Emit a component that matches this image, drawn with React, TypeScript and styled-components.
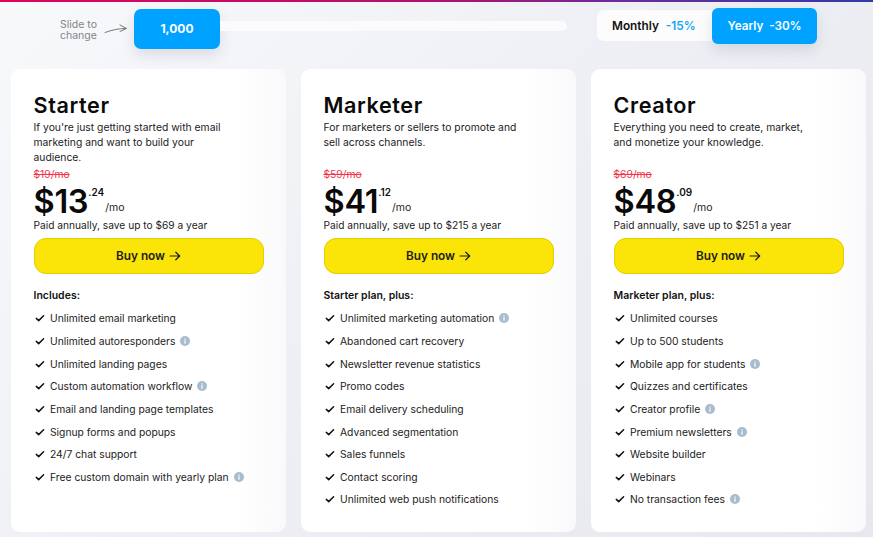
import React from "react";
import styled, { createGlobalStyle } from "styled-components";

const Global = createGlobalStyle`
  html, body { margin: 0; padding: 0; }
  body {
    width: 873px; height: 537px; overflow: hidden;
    font-family: Inter, "Liberation Sans", sans-serif;
    color: #111;
    background: linear-gradient(135deg, #f8f9fb 0%, #eef0f5 45%, #e6e8ee 100%);
  }
`;

const Page = styled.div`
  width: 873px; height: 537px; display: flex; flex-direction: column;
`;
const TopLine = styled.div`
  height: 2px; background: linear-gradient(90deg, #e0045a 0%, #b01170 50%, #6a2b9e 72%, #2f3aa8 100%);
`;
const TopBar = styled.div`
  display: flex; align-items: center; height: 47px; margin-top: 3px; padding-left: 60px;
`;
const SlideLabel = styled.div`
  width: 44px; font-size: 10.5px; line-height: 11px; color: #82858a; margin-top: 2px;
`;
const Slider = styled.div`
  display: flex; align-items: center; width: 433px; margin-left: 6px;
`;
const Thumb = styled.div`
  width: 86px; height: 40px; flex: none; border-radius: 7px; background: #00a2ff;
  display: flex; align-items: center; justify-content: center;
  color: #fff; font-weight: 700; font-size: 12px;
  box-shadow: 0 6px 14px rgba(60, 70, 100, .14);
`;
const Track = styled.div`
  flex: 1; height: 10px; margin-top: -6px; border-radius: 0 5px 5px 0; background: #fbfbfd;
`;
const Toggle = styled.div`
  display: flex; align-items: center; margin: 0 0 6px 30px;
`;
const Monthly = styled.div`
  width: 115px; height: 31px; box-sizing: border-box; padding-left: 15px; border-radius: 7px 0 0 7px; background: #fcfcfd;
  display: flex; align-items: center; gap: 7px; font-size: 11.8px; font-weight: 600;
`;
const Off = styled.span`
  color: #1aa5f5; font-weight: 600;
`;
const Yearly = styled.div`
  width: 105px; height: 36px; border-radius: 6px; background: #00a2ff; color: #fff;
  display: flex; align-items: center; justify-content: center; gap: 6px;
  font-size: 11.7px; font-weight: 600;
  box-shadow: 0 6px 14px rgba(60, 70, 100, .14);
`;
const Cards = styled.div`
  display: flex; gap: 15px; padding: 17px 0 0 11px;
`;
const Card = styled.section`
  width: 275px; height: 463px; box-sizing: border-box; padding: 23px 22px 0 22.5px;
  border-radius: 9px;
  background: linear-gradient(90deg, #fff 0%, #fff 82%, #f9f9fb 100%);
`;
const Title = styled.h2`
  margin: 0; font-size: 21.6px; line-height: 26px; font-weight: 600; letter-spacing: .6px; color: #0a0a0a;
`;
const Desc = styled.p`
  margin: 2px 0 0; height: 48px; font-size: 10.35px; line-height: 15px; color: #222; max-width: 205px;
`;
const OldPrice = styled.div`
  font-size: 10.3px; line-height: 13px; color: #f2354a; text-decoration: line-through;
`;
const PriceRow = styled.div`
  display: flex; height: 35px; align-items: flex-start; margin-top: 2px;
`;
const Amount = styled.span`
  font-size: 32.6px; line-height: 36px; font-weight: 600; letter-spacing: -.3px; color: #0a0a0a;
`;
const Cents = styled.span`
  font-size: 10px; font-weight: 600; line-height: 10px; margin-top: 4px;
`;
const Per = styled.span`
  font-size: 10.5px; margin: 18px 0 0 1px; line-height: 13px; color: #222;
`;
const Paid = styled.div`
  font-size: 10.2px; line-height: 14px; color: #222;
`;
const Buy = styled.button`
  display: flex; align-items: center; justify-content: center; gap: 4px;
  width: 230px; height: 36px; margin-top: 6px; padding: 0; box-sizing: border-box;
  background: #fbe407; border: 1.5px solid #e0ce00; border-radius: 12px;
  font: 600 11.8px Inter, sans-serif; color: #1c1c1c;
`;
const Includes = styled.div`
  margin-top: 15px; font-size: 10.5px; line-height: 13px; font-weight: 600; color: #111;
`;
const List = styled.ul`
  list-style: none; margin: 5px 0 0; padding: 0;
`;
const Row = styled.li`
  display: flex; align-items: center; height: 22.65px; font-size: 10.3px; color: #222;
`;
const Check = styled.svg`
  width: 10px; height: 10px; margin: 0 5.5px 0 1px; flex: none;
`;
const Info = styled.svg`
  width: 10px; height: 10px; margin-left: 5px; flex: none;
`;
const ArrowSvg = styled.svg`
  width: 24px; height: 12px; flex: none;
`;

type Item = [string, boolean?];
const plans: { t: string; d: string; o: string; a: string; c: string; s: string; h: string; items: Item[] }[] = [
  { t: "Starter", d: "If you're just getting started with email marketing and want to build your audience.", o: "$19/mo", a: "$13", c: ".24", s: "$69", h: "Includes:",
    items: [["Unlimited email marketing"], ["Unlimited autoresponders", true], ["Unlimited landing pages"], ["Custom automation workflow", true], ["Email and landing page templates"], ["Signup forms and popups"], ["24/7 chat support"], ["Free custom domain with yearly plan", true]] },
  { t: "Marketer", d: "For marketers or sellers to promote and sell across channels.", o: "$59/mo", a: "$41", c: ".12", s: "$215", h: "Starter plan, plus:",
    items: [["Unlimited marketing automation", true], ["Abandoned cart recovery"], ["Newsletter revenue statistics"], ["Promo codes"], ["Email delivery scheduling"], ["Advanced segmentation"], ["Sales funnels"], ["Contact scoring"], ["Unlimited web push notifications"]] },
  { t: "Creator", d: "Everything you need to create, market, and monetize your knowledge.", o: "$69/mo", a: "$48", c: ".09", s: "$251", h: "Marketer plan, plus:",
    items: [["Unlimited courses"], ["Up to 500 students"], ["Mobile app for students", true], ["Quizzes and certificates"], ["Creator profile", true], ["Premium newsletters", true], ["Website builder"], ["Webinars"], ["No transaction fees", true]] },
];

export default function App() {
  return (
    <Page>
      <Global />
      <TopLine />
      <TopBar>
        <SlideLabel>Slide to change</SlideLabel>
        <ArrowSvg viewBox="0 0 24 12" fill="none" stroke="#77797d" strokeWidth="1" strokeLinecap="round">
          <path d="M1 9.5 C8 7 14 5.5 22 5.5 M16 2 L22.5 5.5 L16 8.5" />
        </ArrowSvg>
        <Slider>
          <Thumb>1,000</Thumb>
          <Track />
        </Slider>
        <Toggle>
          <Monthly>Monthly <Off>-15%</Off></Monthly>
          <Yearly><span>Yearly</span><span>-30%</span></Yearly>
        </Toggle>
      </TopBar>
      <Cards>
        {plans.map((p) => (
          <Card key={p.t}>
            <Title>{p.t}</Title>
            <Desc>{p.d}</Desc>
            <OldPrice>{p.o}</OldPrice>
            <PriceRow>
              <Amount>{p.a}</Amount>
              <Cents>{p.c}</Cents>
              <Per>/mo</Per>
            </PriceRow>
            <Paid>Paid annually, save up to {p.s} a year</Paid>
            <Buy>
              Buy now
              <svg width="12" height="10" viewBox="0 0 12 10" fill="none" stroke="#1c1c1c" strokeWidth="1.2" strokeLinecap="round" strokeLinejoin="round">
                <path d="M1 5 H10.5 M6.8 1.2 L10.7 5 L6.8 8.8" />
              </svg>
            </Buy>
            <Includes>{p.h}</Includes>
            <List>
              {p.items.map(([label, info]) => (
                <Row key={label}>
                  <Check viewBox="0 0 10 10" fill="none" stroke="#111" strokeWidth="1.5" strokeLinecap="round" strokeLinejoin="round">
                    <path d="M1.3 5.4 L3.7 7.6 L8.6 2.8" />
                  </Check>
                  {label}
                  {info && (
                    <Info viewBox="0 0 10 10">
                      <circle cx="5" cy="5" r="5" fill="#a9bccd" />
                      <rect x="4.4" y="4.3" width="1.2" height="3.4" fill="#fff" />
                      <rect x="4.4" y="2.4" width="1.2" height="1.2" fill="#fff" />
                    </Info>
                  )}
                </Row>
              ))}
            </List>
          </Card>
        ))}
      </Cards>
    </Page>
  );
}
